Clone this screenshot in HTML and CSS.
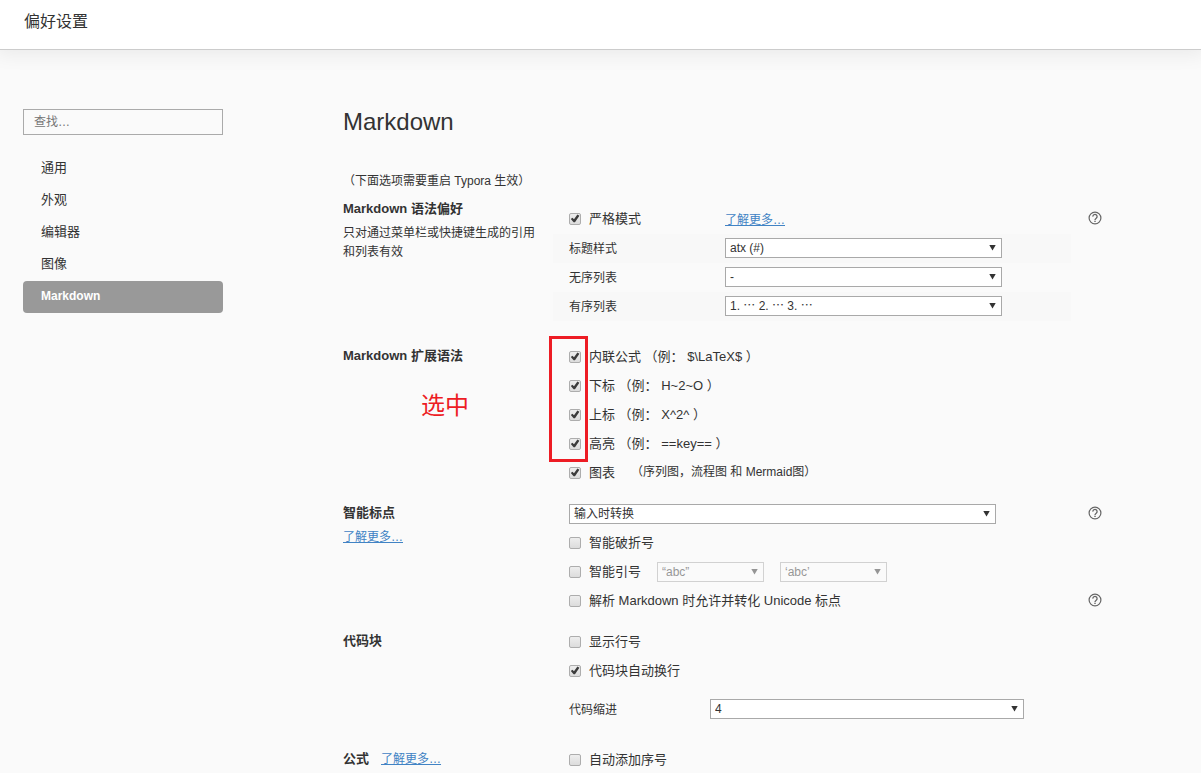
FILE: index.html
```html
<!DOCTYPE html>
<html lang="zh-CN">
<head>
<meta charset="utf-8">
<meta name="viewport" content="width=device-width, initial-scale=1">
<title>偏好设置</title>
<link rel="stylesheet" href="styles.css">
</head>
<body>
<svg class="sprite" aria-hidden="true">
  <symbol id="help" viewBox="0 0 14 14">
    <circle cx="7" cy="7" r="5.9" fill="none" stroke="currentColor" stroke-width="1.2"/>
    <path d="M4.9 5.6a2.1 2.1 0 1 1 3.3 1.6C7.4 7.8 7 8.1 7 9" fill="none" stroke="currentColor" stroke-width="1.3"/>
    <rect x="6.3" y="9.7" width="1.4" height="1.3" fill="currentColor"/>
  </symbol>
</svg>
<header class="topbar"><span class="topbar-title">偏好设置</span></header>
<div class="page">
  <aside class="sidebar">
    <input class="search" type="text" placeholder="查找…" aria-label="查找">
    <nav class="nav">
      <a class="nav-item" href="#general">通用</a>
      <a class="nav-item" href="#appearance">外观</a>
      <a class="nav-item" href="#editor">编辑器</a>
      <a class="nav-item" href="#image">图像</a>
      <a class="nav-item active" href="#markdown">Markdown</a>
    </nav>
  </aside>
  <main class="main" id="markdown">
    <h1 class="heading">Markdown</h1>
    <p class="note">（下面选项需要重启 Typora 生效）</p>

    <section class="section first">
      <div class="info">
        <h2 class="title">Markdown 语法偏好</h2>
        <p class="desc">只对通过菜单栏或快捷键生成的引用和列表有效</p>
      </div>
      <div class="rows">
        <div class="row">
          <div class="cells">
            <label class="check name"><input type="checkbox" checked>严格模式</label>
            <a class="link caption" href="#more">了解更多…</a>
          </div>
          <button class="help" type="button" aria-label="帮助"><svg class="help-icon"><use href="#help"/></svg></button>
        </div>
        <div class="row">
          <div class="cells striped">
            <label class="name caption" for="heading-style">标题样式</label>
            <span class="select medium"><select id="heading-style"><option>atx (#)</option></select></span>
          </div>
        </div>
        <div class="row">
          <div class="cells">
            <label class="name caption" for="bullet-style">无序列表</label>
            <span class="select medium"><select id="bullet-style"><option>-</option></select></span>
          </div>
        </div>
        <div class="row">
          <div class="cells striped">
            <label class="name caption" for="ordered-style">有序列表</label>
            <span class="select medium"><select id="ordered-style"><option>1. ⋯ 2. ⋯ 3. ⋯</option></select></span>
          </div>
        </div>
      </div>
    </section>

    <section class="section">
      <div class="info"><h2 class="title">Markdown 扩展语法</h2></div>
      <div class="rows">
        <div class="row"><div class="cells"><label class="check"><input type="checkbox" checked>内联公式 （例： $\LaTeX$ ）</label></div></div>
        <div class="row"><div class="cells"><label class="check"><input type="checkbox" checked>下标 （例： H~2~O ）</label></div></div>
        <div class="row"><div class="cells"><label class="check"><input type="checkbox" checked>上标 （例： X^2^ ）</label></div></div>
        <div class="row"><div class="cells"><label class="check"><input type="checkbox" checked>高亮 （例： ==key== ）</label></div></div>
        <div class="row"><div class="cells gapped"><label class="check"><input type="checkbox" checked>图表</label><span class="hint">（序列图，流程图 和 Mermaid图）</span></div></div>
      </div>
      <span class="mark-text">选中</span>
      <span class="mark-box"></span>
    </section>

    <section class="section compact">
      <div class="info">
        <h2 class="title">智能标点</h2>
        <p class="desc"><a class="link" href="#more">了解更多…</a></p>
      </div>
      <div class="rows">
        <div class="row">
          <div class="cells"><span class="select wide"><select aria-label="智能标点"><option>输入时转换</option></select></span></div>
          <button class="help" type="button" aria-label="帮助"><svg class="help-icon"><use href="#help"/></svg></button>
        </div>
        <div class="row"><div class="cells"><label class="check"><input type="checkbox">智能破折号</label></div></div>
        <div class="row">
          <div class="cells gapped">
            <label class="check"><input type="checkbox">智能引号</label>
            <span class="select small disabled"><select aria-label="双引号" disabled><option>“abc”</option></select></span>
            <span class="select small disabled"><select aria-label="单引号" disabled><option>‘abc’</option></select></span>
          </div>
        </div>
        <div class="row">
          <div class="cells"><label class="check"><input type="checkbox">解析 Markdown 时允许并转化 Unicode 标点</label></div>
          <button class="help" type="button" aria-label="帮助"><svg class="help-icon"><use href="#help"/></svg></button>
        </div>
      </div>
    </section>

    <section class="section compact">
      <div class="info"><h2 class="title">代码块</h2></div>
      <div class="rows">
        <div class="row"><div class="cells"><label class="check"><input type="checkbox">显示行号</label></div></div>
        <div class="row"><div class="cells"><label class="check"><input type="checkbox" checked>代码块自动换行</label></div></div>
        <div class="row spaced">
          <div class="cells">
            <label class="name narrow caption" for="indent">代码缩进</label>
            <span class="select large"><select id="indent"><option>4</option></select></span>
          </div>
        </div>
      </div>
    </section>

    <section class="section">
      <div class="info inline">
        <h2 class="title">公式</h2>
        <a class="link" href="#more">了解更多…</a>
      </div>
      <div class="rows">
        <div class="row"><div class="cells"><label class="check"><input type="checkbox">自动添加序号</label></div></div>
      </div>
    </section>
  </main>
</div>
</body>
</html>
```
FILE: styles.css
```css
* { box-sizing: border-box; }

html { scrollbar-width: none; }

body {
  margin: 0;
  background: #fafafa;
  color: #333;
  font: 12px/19px "Liberation Sans", "Noto Sans CJK SC", sans-serif;
}

h1, h2, p { margin: 0; }

.sprite { display: none; }

.topbar {
  height: 50px;
  padding: 10px 24px;
  background: #fff;
  border-bottom: 1px solid #ccc;
  box-shadow: 0 0 20px 4px rgba(0, 0, 0, 0.07);
}

.topbar-title { font-size: 16px; line-height: 24px; }

.page {
  display: grid;
  grid-template-columns: 200px minmax(0, 1fr);
  column-gap: 120px;
  padding: 59px 82px 0 23px;
}

.search {
  display: block;
  width: 100%;
  height: 26px;
  padding: 0 10px;
  border: 1px solid #aaa;
  background: transparent;
  color: #333;
  font: inherit;
}

.search::placeholder { color: #757575; }

.nav { margin-top: 18px; }

.nav-item {
  display: block;
  padding: 0 18px 2px;
  border-radius: 4px;
  color: #333;
  font-size: 13px;
  line-height: 30px;
  text-decoration: none;
}

.nav-item.active {
  background: #999;
  color: #fff;
  font-size: 12px;
  font-weight: bold;
}

.heading {
  font-size: 24px;
  font-weight: normal;
  line-height: 26px;
}

.note { margin-top: 37px; }

.section {
  position: relative;
  display: grid;
  grid-template-columns: 210px minmax(0, 1fr);
  margin-top: 22px;
}

.section.compact { margin-top: 12px; }

.section.first { margin-top: 5px; }

.first .rows { padding-top: 9px; }

.info { padding: 1px 16px 0 0; }

.info.inline {
  display: flex;
  align-items: baseline;
  gap: 12px;
}

.title {
  font-size: 13px;
  font-weight: bold;
  line-height: 24px;
}

.desc { margin-top: 3px; }

.link { color: #4183c4; text-decoration: underline; }

.row {
  display: grid;
  grid-template-columns: minmax(0, 1fr) 48px;
  min-height: 29px;
}

.row.spaced { margin-top: 9px; }

.cells {
  display: flex;
  align-items: center;
  padding: 0 16px 2px;
}

.cells.striped { background: #f8f8f8; }

.cells.gapped { gap: 16px; }

.name { width: 156px; }

.name.narrow { width: 141px; }

.caption { padding-top: 4px; }

.check {
  display: flex;
  align-items: center;
  gap: 8px;
  font-size: 13px;
}

.check input {
  appearance: none;
  display: grid;
  place-items: center;
  flex: none;
  width: 12px;
  height: 12px;
  margin: 0;
  border: 1px solid #adadad;
  border-radius: 2px;
  background: linear-gradient(#eee, #dcdcdc);
}

.check input:checked::before {
  content: "";
  width: 10px;
  height: 10px;
  background: #3c3c3c;
  clip-path: polygon(8% 54%, 24% 42%, 40% 58%, 74% 10%, 94% 22%, 50% 88%, 36% 88%);
}

.help {
  display: grid;
  place-items: center;
  padding: 0 0 4px;
  border: 0;
  background: none;
  color: #666;
}

.help-icon { width: 14px; height: 14px; }

.select {
  position: relative;
  flex: 0 1 auto;
  height: 20px;
}

.select select {
  appearance: none;
  display: block;
  width: 100%;
  height: 20px;
  padding: 0 20px 0 4px;
  border: 1px solid #a9a9a9;
  border-radius: 0;
  background: #fff;
  color: #333;
  font: inherit;
  line-height: 18px;
}

.select::after {
  content: "";
  position: absolute;
  top: 7px;
  right: 6px;
  width: 7px;
  height: 6px;
  background: #333;
  clip-path: polygon(0 0, 100% 0, 50% 100%);
  pointer-events: none;
}

.select.disabled { opacity: 0.5; }

.select.disabled select { background: transparent; opacity: 1; }

.select.small { width: 107px; }
.select.medium { width: 277px; }
.select.large { width: 314px; }
.select.wide { width: 427px; }

.mark-text {
  position: absolute;
  top: 51px;
  left: 78px;
  color: #ed1c24;
  font-size: 24px;
  line-height: 24px;
}

.mark-box {
  position: absolute;
  top: -7px;
  left: 206px;
  width: 39px;
  height: 126px;
  border: 3px solid #ed1c24;
  pointer-events: none;
}
```
